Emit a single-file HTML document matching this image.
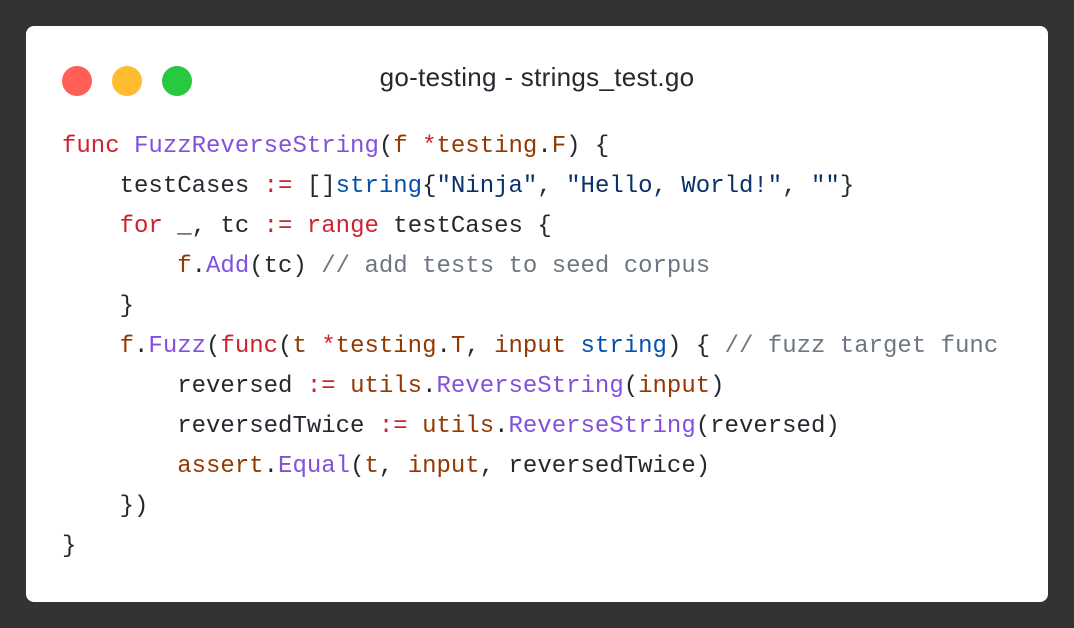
<!DOCTYPE html>
<html><head><meta charset="utf-8"><style>
html,body{margin:0;padding:0;}
body{width:1074px;height:628px;background:#333333;position:relative;overflow:hidden;}
.card{position:absolute;left:26px;top:26px;width:1022px;height:576px;background:#fff;border-radius:8px;}
.dot{position:absolute;top:40px;width:30px;height:30px;border-radius:50%;}
.title{position:absolute;left:0;width:1022px;top:34px;text-align:center;font-family:"Liberation Sans",sans-serif;font-size:26px;letter-spacing:0.3px;color:#24292f;line-height:34px;}
pre{position:absolute;left:36px;top:101px;margin:0;font-family:"Liberation Mono",monospace;font-size:24px;line-height:40px;color:#24292f;}
.k{color:#cf222e}.f{color:#8250df}.p{color:#953800}.s{color:#0a3069}.t{color:#0550ae}.c{color:#6e7781}
</style></head><body>
<div class="card">
<div class="dot" style="left:36px;background:#ff5f57"></div>
<div class="dot" style="left:86px;background:#febc2e"></div>
<div class="dot" style="left:136px;background:#28c840"></div>
<div class="title">go-testing - strings_test.go</div>
<pre><span class="k">func</span> <span class="f">FuzzReverseString</span>(<span class="p">f</span> <span class="k">*</span><span class="p">testing</span>.<span class="p">F</span>) {
    testCases <span class="k">:=</span> []<span class="t">string</span>{<span class="s">"Ninja"</span>, <span class="s">"Hello, World!"</span>, <span class="s">""</span>}
    <span class="k">for</span> _, tc <span class="k">:=</span> <span class="k">range</span> testCases {
        <span class="p">f</span>.<span class="f">Add</span>(tc) <span class="c">// add tests to seed corpus</span>
    }
    <span class="p">f</span>.<span class="f">Fuzz</span>(<span class="k">func</span>(<span class="p">t</span> <span class="k">*</span><span class="p">testing</span>.<span class="p">T</span>, <span class="p">input</span> <span class="t">string</span>) { <span class="c">// fuzz target func</span>
        reversed <span class="k">:=</span> <span class="p">utils</span>.<span class="f">ReverseString</span>(<span class="p">input</span>)
        reversedTwice <span class="k">:=</span> <span class="p">utils</span>.<span class="f">ReverseString</span>(reversed)
        <span class="p">assert</span>.<span class="f">Equal</span>(<span class="p">t</span>, <span class="p">input</span>, reversedTwice)
    })
}</pre>
</div>
</body></html>
